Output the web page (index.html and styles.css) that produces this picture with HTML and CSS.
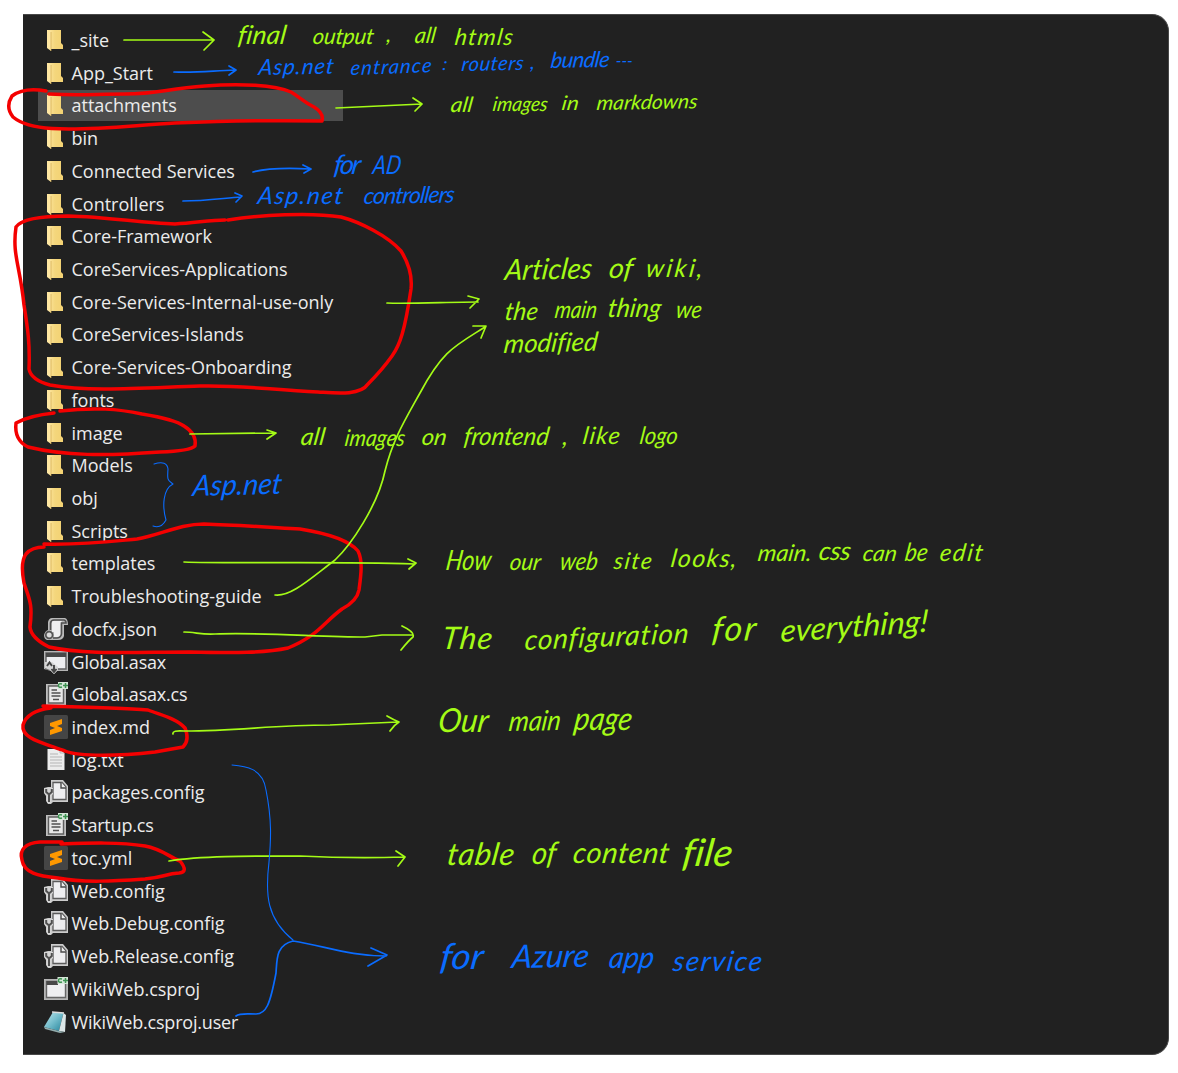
FILE: index.html
```html
<!DOCTYPE html>
<html lang="en">
<head>
<meta charset="utf-8">
<title>Wiki project structure</title>
<link rel="stylesheet" href="styles.css">
</head>
<body>
<svg class="defs" width="0" height="0">
  <defs>
    <linearGradient id="gold"><stop offset="0" stop-color="#ffe9a6"/><stop offset=".5" stop-color="#f4d67c"/><stop offset="1" stop-color="#f3d273"/></linearGradient>
    <linearGradient id="teal" x1="0" y1="0" x2="1" y2="1"><stop offset="0" stop-color="#c4e8ee"/><stop offset=".5" stop-color="#72bccb"/><stop offset="1" stop-color="#25839a"/></linearGradient>
    <symbol id="folder" viewBox="0 0 24 24"><path d="M3 2H17V15L19 17V21H7L3 19Z" fill="url(#gold)"/><path d="M3 2L7 4V23L3 20Z" fill="#ffe7a2"/><path d="M7 4V23" stroke="#cda64b" stroke-width=".7"/></symbol>
    <symbol id="json" viewBox="0 0 24 24"><path d="M8 1H21Q24 2 24 8H20V19Q19 23 14 23H3Q0 22 0 18Q1 14 4 13V5Q5 1 8 1Z" fill="#b9b9b9"/><path d="M8 4H18Q16.500 5 16.500 8V17Q16 20 13 20H10V15H8Z" fill="#efeff0"/><path d="M6.500 13V6Q7 3 10 3H20Q22 3.500 22 6H17.500V17Q17 20.500 13 21H9" fill="none" stroke="#505050" stroke-width="1.600"/><circle cx="5.200" cy="18" r="3.400" fill="#ddd" stroke="#555" stroke-width="1.800"/></symbol>
    <symbol id="asax" viewBox="0 0 24 24"><path d="M0 1H24V21H13L10 24L7 21L0 19Z" fill="#b5b5b5"/><path d="M2 3H22V19H2Z" fill="#eeeef0" stroke="#606060" stroke-width="1.400"/><path d="M2 3H22V7H2Z" fill="#484848"/><path d="M1 12H8L14 17V20L10 24L6 20L1 18Z" fill="#d5d5d5"/><path d="M3 16L5.500 12.500L8 16M10 15V21M7.500 19L10 22L12.500 19" fill="none" stroke="#444" stroke-width="1.900"/></symbol>
    <symbol id="code" viewBox="0 0 24 24"><path d="M2 2H22V23H2Z" fill="#bebebe"/><path d="M4.500 4H19.500V21H4.500Z" fill="#e8e8e8" stroke="#606060" stroke-width="1.400"/><path d="M7.500 8H13M7.500 11H16.500M7.500 14H16.500M9 17.500H15" stroke="#505050" stroke-width="1.500"/><path d="M14 0H24V7H14Z" fill="#d5e6d8"/><path d="M18 2Q14.500 1 14.500 3.500Q14.500 6 18 5M19 3.500H24M21.500 1V6" fill="none" stroke="#3c9250" stroke-width="1.500"/></symbol>
    <symbol id="sublime" viewBox="0 0 24 24"><rect width="24" height="24" rx="1.500" fill="#454545"/><path d="M6 8L18 4V9L13 11L18 13V16L6 20V15L11 13L6 11Z" fill="#ff9800"/></symbol>
    <symbol id="text" viewBox="0 0 24 24"><path d="M3.500 1H16L20.500 5V22H3.500Z" fill="#ececec"/><path d="M16 1V5H20M6 6H14M6 9H18M6 12H18M6 15H18M6 18H18" fill="none" stroke="#b5b5b5" stroke-width="1"/></symbol>
    <symbol id="config" viewBox="0 0 24 24"><path d="M7 0H19L24 6V22H9L7 24H4L2 21V16L0 13V8L4 7H7Z" fill="#ccc"/><path d="M9 2.500H18L22 7V19.500H9Z" fill="#eeeef0" stroke="#5b5b5b" stroke-width="1.300"/><path d="M17 2V8H22" fill="#eee" stroke="#4b4b4b" stroke-width="1.400"/><path d="M0.500 8H9V14L7 16V23H3V16L0.500 13Z" fill="#d5d5d5"/><path d="M2.200 9V12L5 14.500L7.800 12V9M5 14V22" fill="none" stroke="#505050" stroke-width="2"/></symbol>
    <symbol id="project" viewBox="0 0 24 24"><path d="M0 2H24V23H0Z" fill="#b5b5b5"/><path d="M2.500 4.500H21.500V20.500H2.500Z" fill="#eeeef0" stroke="#666" stroke-width="1.400"/><path d="M2.500 4H14V8H2.500Z" fill="#484848"/><path d="M13.500 0H24V7H13.500Z" fill="#d5e6d8"/><path d="M18 2Q14.500 1 14.500 3.500Q14.500 6 18 5M19 3.500H24M21.500 1V6" fill="none" stroke="#3c9250" stroke-width="1.500"/></symbol>
    <symbol id="user" viewBox="0 0 24 24"><path d="M9 2L19.500 3L15 21L0 17Z" fill="url(#teal)"/><path d="M19.500 3L22 5L21 22L15 21Z" fill="#dce6e7"/><path d="M0 17L15 21L21 22L16 23L1 19Z" fill="#91acad"/><path d="M8 2L20 3" stroke="#ddd" stroke-width="1.300"/></symbol>
  </defs>
</svg>
<main class="panel">
  <ul class="files">
    <li class="file"><svg class="icon"><use href="#folder"/></svg><span>_site</span></li>
    <li class="file"><svg class="icon"><use href="#folder"/></svg><span>App_Start</span></li>
    <li class="file selected"><svg class="icon"><use href="#folder"/></svg><span>attachments</span></li>
    <li class="file"><svg class="icon"><use href="#folder"/></svg><span>bin</span></li>
    <li class="file"><svg class="icon"><use href="#folder"/></svg><span>Connected Services</span></li>
    <li class="file"><svg class="icon"><use href="#folder"/></svg><span>Controllers</span></li>
    <li class="file"><svg class="icon"><use href="#folder"/></svg><span>Core-Framework</span></li>
    <li class="file"><svg class="icon"><use href="#folder"/></svg><span>CoreServices-Applications</span></li>
    <li class="file"><svg class="icon"><use href="#folder"/></svg><span>Core-Services-Internal-use-only</span></li>
    <li class="file"><svg class="icon"><use href="#folder"/></svg><span>CoreServices-Islands</span></li>
    <li class="file"><svg class="icon"><use href="#folder"/></svg><span>Core-Services-Onboarding</span></li>
    <li class="file"><svg class="icon"><use href="#folder"/></svg><span>fonts</span></li>
    <li class="file"><svg class="icon"><use href="#folder"/></svg><span>image</span></li>
    <li class="file"><svg class="icon"><use href="#folder"/></svg><span>Models</span></li>
    <li class="file"><svg class="icon"><use href="#folder"/></svg><span>obj</span></li>
    <li class="file"><svg class="icon"><use href="#folder"/></svg><span>Scripts</span></li>
    <li class="file"><svg class="icon"><use href="#folder"/></svg><span>templates</span></li>
    <li class="file"><svg class="icon"><use href="#folder"/></svg><span>Troubleshooting-guide</span></li>
    <li class="file"><svg class="icon"><use href="#json"/></svg><span>docfx.json</span></li>
    <li class="file"><svg class="icon"><use href="#asax"/></svg><span class="snug">Global.asax</span></li>
    <li class="file"><svg class="icon"><use href="#code"/></svg><span class="snug">Global.asax.cs</span></li>
    <li class="file"><svg class="icon"><use href="#sublime"/></svg><span>index.md</span></li>
    <li class="file"><svg class="icon"><use href="#text"/></svg><span>log.txt</span></li>
    <li class="file"><svg class="icon"><use href="#config"/></svg><span>packages.config</span></li>
    <li class="file"><svg class="icon"><use href="#code"/></svg><span class="snug">Startup.cs</span></li>
    <li class="file"><svg class="icon"><use href="#sublime"/></svg><span>toc.yml</span></li>
    <li class="file"><svg class="icon"><use href="#config"/></svg><span>Web.config</span></li>
    <li class="file"><svg class="icon"><use href="#config"/></svg><span>Web.Debug.config</span></li>
    <li class="file"><svg class="icon"><use href="#config"/></svg><span>Web.Release.config</span></li>
    <li class="file"><svg class="icon"><use href="#project"/></svg><span>WikiWeb.csproj</span></li>
    <li class="file"><svg class="icon"><use href="#user"/></svg><span class="snug">WikiWeb.csproj.user</span></li>
  </ul>
</main>

<svg class="ink" viewBox="0 0 1178 1073">
  <g class="red">
    <path d="M46 91Q24 87 12 96Q5 107 13 117Q25 127 52 128.500C90 131 135 125 175 123C225 121 270 120 322 121Q324 113 314 107C302 101 301 98 291 92C275 85 240 83 205 86C165 89 158 94 125 94C95 94 80 96 49 94"/>
    <path d="M228 220C260 215 310 212 341 217C360 222 388 236 401 251Q413 270 411 289C405 330 400 345 392 356Q382 370 368 384C360 396 335 393 318 392C270 390 245 385 200 386C140 388 90 392 50 385Q31 380 29 369C30 345 28 330 24 305C20 265 12 255 16 227C23 217 50 216 68 216C110 217 140 223 175 224C195 223 210 220 225 220"/>
    <path d="M60 411C95 407 118 409 142 414C160 417 177 421 184 426Q197 434 195 446Q190 451 160 452C105 456 65 456 28 447Q14 440 16 423C25 418 35 415 54 413"/>
    <path d="M44 544C85 545 115 541 137 539C160 535 180 524 204 524C235 525 265 527 300 529C325 533 348 539 358 551C363 561 361 575 359 590Q357 601 342 609C324 622 318 636 288 648C265 653 235 653 190 652C135 652 85 655 49 647Q31 638 30 627C33 603 29 599 24 583Q20 562 26 554Q32 547 44 547"/>
    <path d="M51 708Q27 711 23 725C21 738 40 742 65 751C80 757 120 756 155 752L183 747Q190 740 185 728C176 718 160 715 148 710C125 708 85 707 43 706"/>
    <path d="M61 844C90 843 120 842 145 846C162 849 169 857 180 861Q189 872 179 873C165 874 165 877 145 879C115 881 83 883 58 878C38 876 24 873 22 860C19 850 25 843 40 842L62 842"/>
  </g>
  <g class="green strokes">
    <path d="M124 40L214 40M203 32L214 40L204 50"/>
    <path d="M336 108L422 104M413 98L422 104L415 111"/>
    <path d="M387 303C408 304 450 302 478 302M468 296L479 299L470 308"/>
    <path d="M190 434L275 433M267 430L276 433L267 439"/>
    <path d="M184 562C230 564 320 561 415 564M408 559L416 563L409 569"/>
    <path d="M275 595C291 597 311 578 335 560C351 545 378 505 385 471C393 439 405 420 420 393C443 350 455 346 485 327M473 326L486 326L481 338"/>
    <path d="M184 632C195 632 202 635 215 634C260 632 320 637 365 637L382 635L412 635M402 626Q415 632 413 637Q409 640 401 650"/>
    <path d="M173 734Q172 730 184 731C240 731 270 725 330 725L398 722M387 716Q394 720 399 722Q394 725 390 731"/>
    <path d="M169 861C200 856 245 856 300 856C340 858 370 858 404 857M396 851L405 857L398 866"/>
  </g>
  <g class="blue strokes">
    <path d="M174 72C195 73 210 71 235 70M229 66L236 70L229 75"/>
    <path d="M253 172Q272 167 310 169M303 165L311 169L304 173"/>
    <path d="M183 201C205 201 225 198 241 197M235 193L242 196L236 202"/>
    <path class="fine" d="M154 464Q167 460 168 469C167 481 168 480 173 484C163 489 162 506 166 520Q161 529 153 526"/>
    <path class="fine" d="M232 765C245 766 263 768 266 790C272 820 271 840 269 862C265 895 267 919 293 940"/>
    <path d="M293 941C276 945 277 959 276 973C270 1005 266 1014 256 1014C245 1014 240 1013 236 1016M293 941C325 946 350 956 386 956M371 948L387 955L368 966"/>
  </g>

  <g class="green hand">
    <text transform="translate(237 44) skewX(-8)" font-size="26" textLength="48">final</text>
    <text transform="translate(312 44) skewX(-8)" font-size="22" textLength="61">output</text>
    <text transform="translate(386 42) skewX(-8)" font-size="22">,</text>
    <text transform="translate(414 43) skewX(-8)" font-size="22" textLength="21" lengthAdjust="spacingAndGlyphs">all</text>
    <text transform="translate(454 45) skewX(-8)" font-size="23" textLength="58">htmls</text>
    <text transform="translate(450 112) skewX(-8)" font-size="21" textLength="22" lengthAdjust="spacingAndGlyphs">all</text>
    <text transform="translate(492 111) skewX(-8)" font-size="20" textLength="55" lengthAdjust="spacingAndGlyphs">images</text>
    <text transform="translate(561 110) skewX(-8)" font-size="20" textLength="17" lengthAdjust="spacingAndGlyphs">in</text>
    <text transform="translate(596 110) rotate(-1) skewX(-8)" font-size="20" textLength="101" lengthAdjust="spacingAndGlyphs">markdowns</text>
    <text transform="translate(504 280) rotate(-1) skewX(-8)" font-size="29" textLength="87" lengthAdjust="spacingAndGlyphs">Articles</text>
    <text transform="translate(608 278) skewX(-8)" font-size="28" textLength="24" lengthAdjust="spacingAndGlyphs">of</text>
    <text transform="translate(645 277) skewX(-8)" font-size="25" textLength="57">wiki,</text>
    <text transform="translate(504 320) skewX(-8)" font-size="25" textLength="33" lengthAdjust="spacingAndGlyphs">the</text>
    <text transform="translate(554 318) skewX(-8)" font-size="24" textLength="42" lengthAdjust="spacingAndGlyphs">main</text>
    <text transform="translate(607 317) skewX(-8)" font-size="26" textLength="53" lengthAdjust="spacingAndGlyphs">thing</text>
    <text transform="translate(675 318) skewX(-8)" font-size="24" textLength="26" lengthAdjust="spacingAndGlyphs">we</text>
    <text transform="translate(503 353) rotate(-1.500) skewX(-8)" font-size="26" textLength="94" lengthAdjust="spacingAndGlyphs">modified</text>
    <text transform="translate(300 445) skewX(-8)" font-size="24" textLength="24" lengthAdjust="spacingAndGlyphs">all</text>
    <text transform="translate(344 446) skewX(-8)" font-size="23" textLength="60" lengthAdjust="spacingAndGlyphs">images</text>
    <text transform="translate(421 445) skewX(-8)" font-size="23" textLength="25" lengthAdjust="spacingAndGlyphs">on</text>
    <text transform="translate(463 445) skewX(-8)" font-size="25" textLength="85" lengthAdjust="spacingAndGlyphs">frontend</text>
    <text transform="translate(562 445) skewX(-8)" font-size="25">,</text>
    <text transform="translate(582 444) skewX(-8)" font-size="24" textLength="37">like</text>
    <text transform="translate(639 444) skewX(-8)" font-size="24" textLength="38" lengthAdjust="spacingAndGlyphs">logo</text>
    <text transform="translate(445 570) skewX(-8)" font-size="28" textLength="45" lengthAdjust="spacingAndGlyphs">How</text>
    <text transform="translate(509 570) skewX(-8)" font-size="23" textLength="31" lengthAdjust="spacingAndGlyphs">our</text>
    <text transform="translate(559 570) skewX(-8)" font-size="25" textLength="38" lengthAdjust="spacingAndGlyphs">web</text>
    <text transform="translate(613 569) skewX(-8)" font-size="23" textLength="38">site</text>
    <text transform="translate(670 567) skewX(-8)" font-size="25" textLength="66">looks,</text>
    <text transform="translate(757 561) skewX(-8)" font-size="23" textLength="54" lengthAdjust="spacingAndGlyphs">main.</text>
    <text transform="translate(818 560) skewX(-8)" font-size="26" textLength="32">css</text>
    <text transform="translate(862 561) skewX(-8)" font-size="22" textLength="34" lengthAdjust="spacingAndGlyphs">can</text>
    <text transform="translate(904 561) skewX(-8)" font-size="25" textLength="23" lengthAdjust="spacingAndGlyphs">be</text>
    <text transform="translate(939 561) skewX(-8)" font-size="24" textLength="43">edit</text>
    <text transform="translate(441 649) skewX(-8)" font-size="31" textLength="50">The</text>
    <text transform="translate(524 650) rotate(-2.500) skewX(-8)" font-size="28" textLength="164">configuration</text>
    <text transform="translate(711 641) rotate(-1) skewX(-8)" font-size="34" textLength="44">for</text>
    <text transform="translate(780 642) rotate(-4) skewX(-8)" font-size="31" textLength="148" lengthAdjust="spacingAndGlyphs">everything!</text>
    <text transform="translate(437 732) skewX(-8)" font-size="33" textLength="50" lengthAdjust="spacingAndGlyphs">Our</text>
    <text transform="translate(508 731) rotate(-1) skewX(-8)" font-size="28" textLength="52" lengthAdjust="spacingAndGlyphs">main</text>
    <text transform="translate(573 730) skewX(-8)" font-size="32" textLength="58" lengthAdjust="spacingAndGlyphs">page</text>
    <text transform="translate(446 865) skewX(-8)" font-size="31" textLength="67">table</text>
    <text transform="translate(531 864) skewX(-8)" font-size="31" textLength="24" lengthAdjust="spacingAndGlyphs">of</text>
    <text transform="translate(572 863) skewX(-8)" font-size="29" textLength="96">content</text>
    <text transform="translate(681 866) skewX(-8)" font-size="38" textLength="50" lengthAdjust="spacingAndGlyphs">file</text>
  </g>
  <g class="blue hand">
    <text transform="translate(258 75) rotate(-1) skewX(-8)" font-size="22" textLength="75">Asp.net</text>
    <text transform="translate(350 75) rotate(-2) skewX(-8)" font-size="20" textLength="81">entrance</text>
    <text transform="translate(442 70) skewX(-8)" font-size="18">:</text>
    <text transform="translate(461 71) rotate(-1) skewX(-8)" font-size="20" textLength="62">routers</text>
    <text transform="translate(530 69) skewX(-8)" font-size="20">,</text>
    <text transform="translate(550 68) rotate(-1) skewX(-8)" font-size="22" textLength="59">bundle</text>
    <text transform="translate(615 67) skewX(-8)" font-size="18" textLength="17" lengthAdjust="spacingAndGlyphs">---</text>
    <text transform="translate(333 174) skewX(-8)" font-size="27" textLength="27">for</text>
    <text transform="translate(372 174) skewX(-8)" font-size="26" textLength="28" lengthAdjust="spacingAndGlyphs">AD</text>
    <text transform="translate(257 204) skewX(-8)" font-size="24" textLength="85">Asp.net</text>
    <text transform="translate(363 204) rotate(-1) skewX(-8)" font-size="23" textLength="91">controllers</text>
    <text transform="translate(192 496) rotate(-1.500) skewX(-8)" font-size="29" textLength="89" lengthAdjust="spacingAndGlyphs">Asp.net</text>
    <text transform="translate(439 969) skewX(-8)" font-size="36" textLength="43" lengthAdjust="spacingAndGlyphs">for</text>
    <text transform="translate(511 968) rotate(-1) skewX(-8)" font-size="32" textLength="77" lengthAdjust="spacingAndGlyphs">Azure</text>
    <text transform="translate(608 968) skewX(-8)" font-size="30" textLength="45" lengthAdjust="spacingAndGlyphs">app</text>
    <text transform="translate(672 971) skewX(-8)" font-size="28" textLength="89">service</text>
  </g>
</svg>
</body>
</html>
```
FILE: styles.css
```css
* { box-sizing: border-box; }

body {
  margin: 0;
  padding: 14px 0 0 23px;
  height: 1073px;
  overflow: hidden;
  position: relative;
  background: #fff;
  font-family: "Open Sans", "Noto Sans", sans-serif;
}

.defs { position: absolute; }

.panel {
  width: 1145.5px;
  height: 1041px;
  padding: 8.600px 0 0 15px;
  background: #212121;
  border: 1px solid #484848;
  border-left: 0;
  border-radius: 0 17px 17px 0;
}

.files {
  margin: 0;
  padding: 0;
  list-style: none;
  width: 304.500px;
}

.file {
  display: flex;
  align-items: center;
  gap: 4px;
  height: 32.73px;
  padding-left: 5.500px;
  color: #ececec;
  font-size: 18px;
  line-height: 24px;
  white-space: nowrap;
}

.file.selected {
  background: #4d4d4d;
  border-top: 1px solid #212121;
  border-bottom: 1px solid #212121;
}

.snug { letter-spacing: -.2px; }

.icon {
  flex: none;
  width: 24px;
  height: 24px;
}

.ink {
  position: absolute;
  left: 0;
  top: 0;
  width: 1178px;
  height: 1073px;
}

.red {
  fill: none;
  stroke: #f40000;
  stroke-width: 3.500;
  stroke-linecap: round;
  stroke-linejoin: round;
}

.strokes {
  fill: none;
  stroke-width: 1.700;
  stroke-linecap: round;
  stroke-linejoin: round;
}

.green.strokes { stroke: #a4fb16; }
.blue.strokes { stroke: #0a6cff; }
.strokes .fine { stroke-width: 1.100; }

.hand {
  font-family: Lato, "Liberation Sans", sans-serif;
  font-style: italic;
  font-weight: 400;
  font-variant-ligatures: none;
}

.green.hand { fill: #a4fb16; }
.blue.hand { fill: #0a6cff; }
```
